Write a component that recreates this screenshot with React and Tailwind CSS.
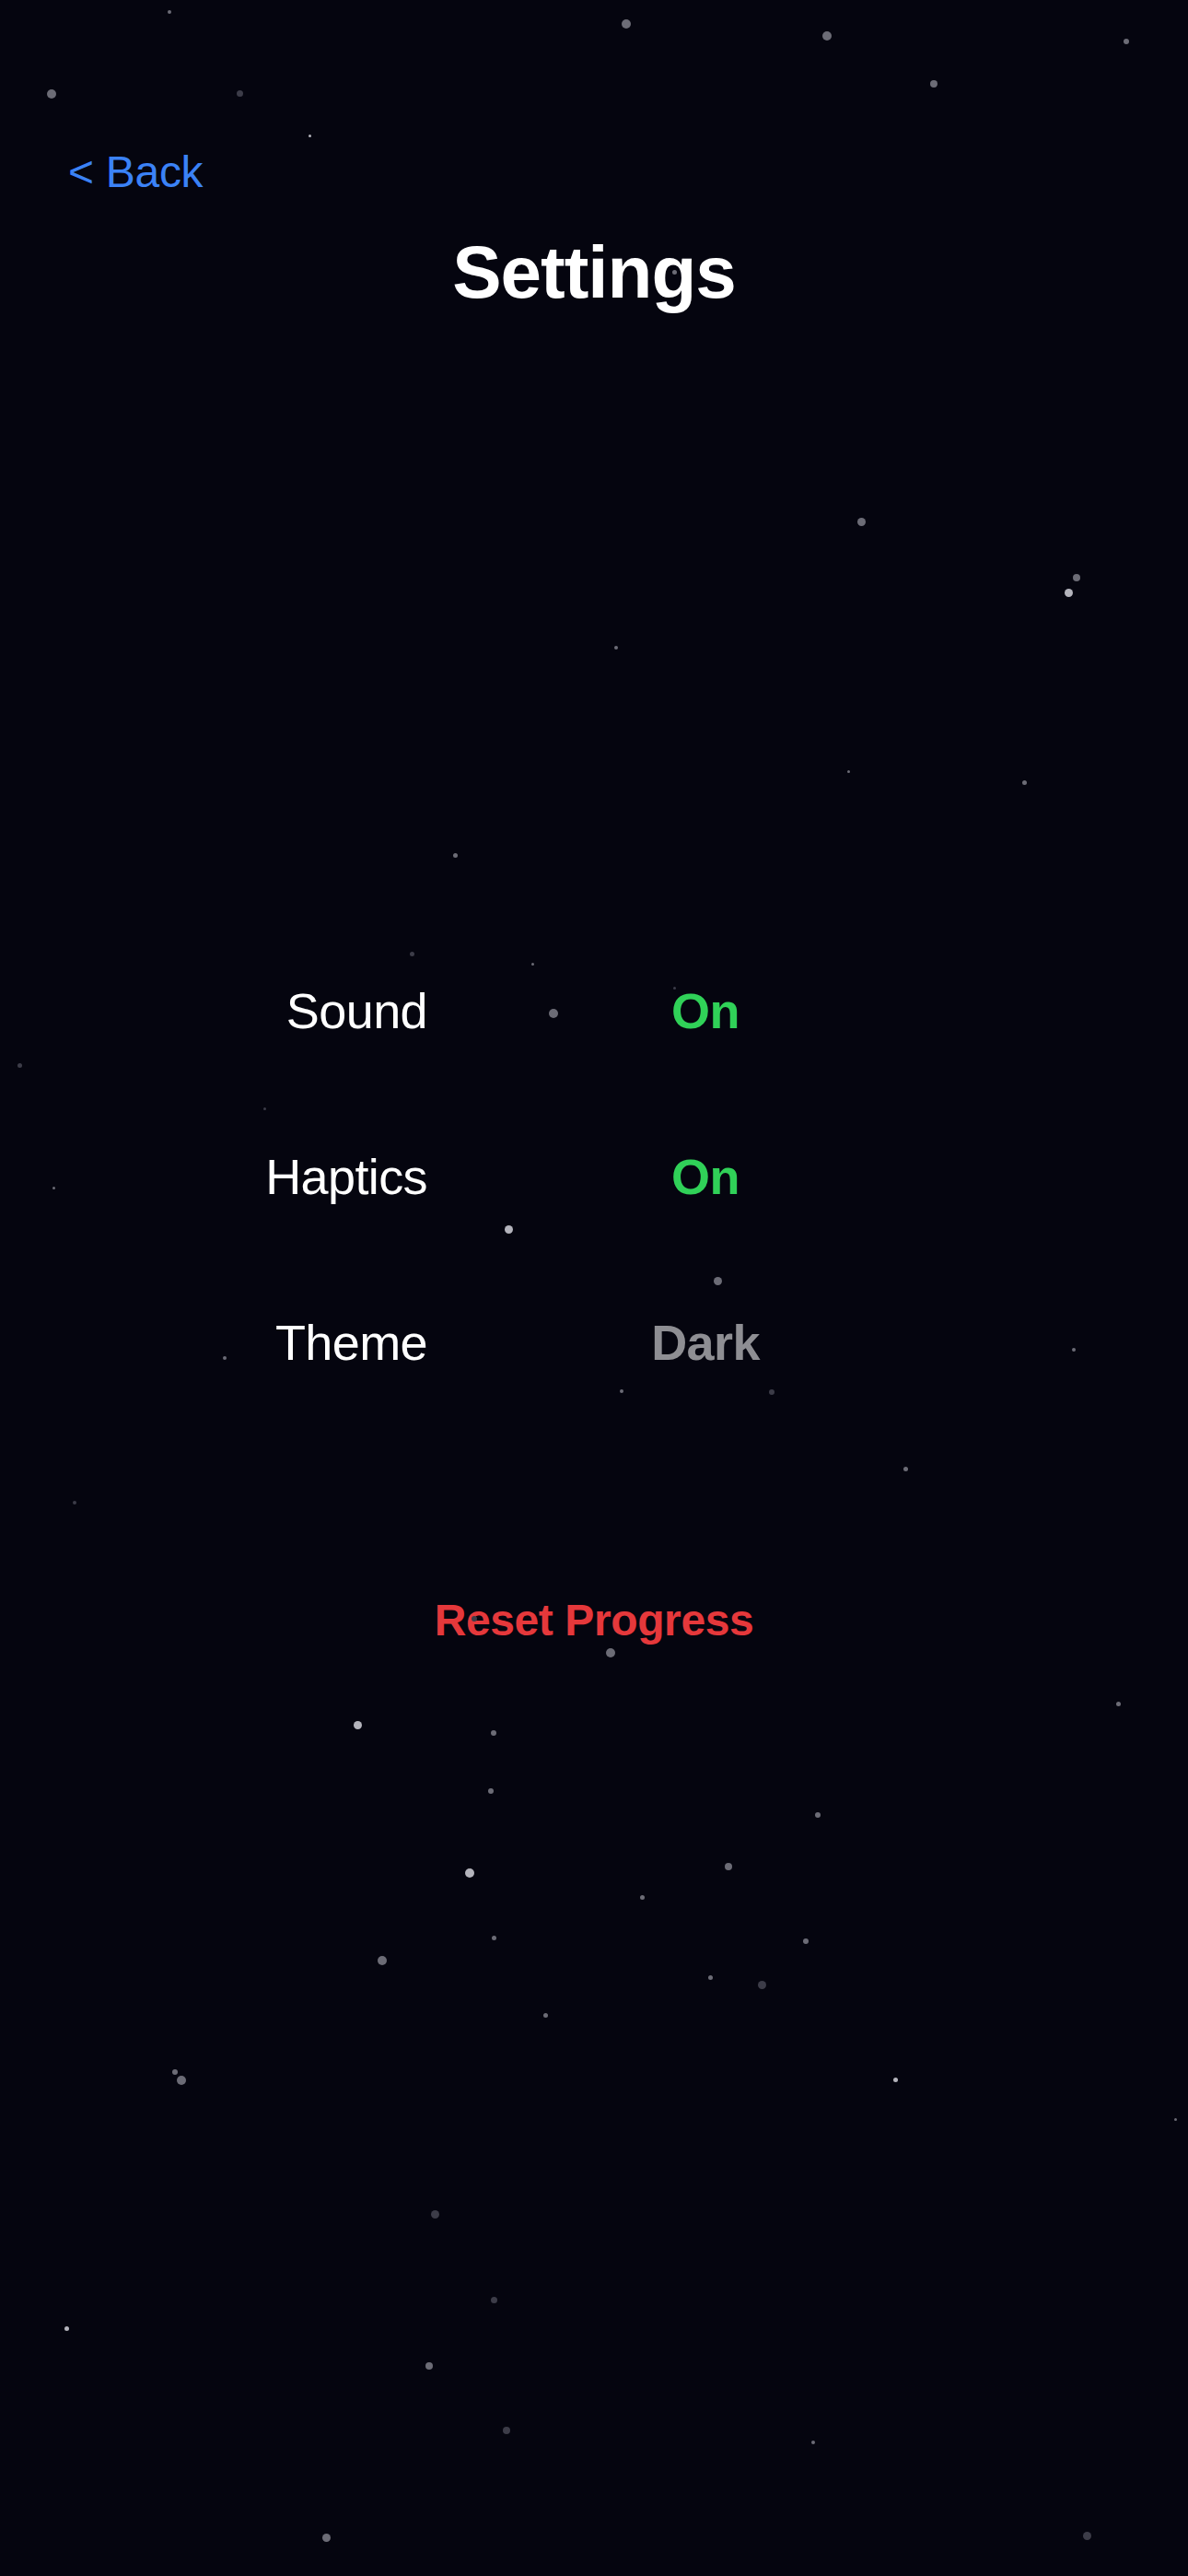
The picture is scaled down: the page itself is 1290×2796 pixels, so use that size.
import React from "react";

const B = "#b4b4bc";
const M = "#6c6c76";
const D = "#3c3c48";

const stars = [
  [184, 13, 4, M], [680, 26, 10, M], [898, 39, 10, M], [1223, 45, 6, M],
  [56, 102, 10, M], [260, 101, 7, D], [1014, 91, 8, M], [336, 147, 3, B],
  [732, 295, 5, M], [935, 566, 9, M], [1169, 627, 8, M], [1160, 643, 9, B],
  [669, 703, 4, M], [921, 837, 3, M], [1112, 849, 5, M], [494, 928, 5, M],
  [447, 1035, 5, D], [578, 1046, 3, M], [732, 1072, 3, D], [601, 1100, 10, M],
  [21, 1156, 5, D], [287, 1203, 3, D], [58, 1289, 3, M], [552, 1334, 9, B],
  [779, 1390, 9, M], [1166, 1465, 4, M], [244, 1474, 4, M], [675, 1510, 4, M],
  [838, 1511, 6, D], [983, 1594, 5, M], [81, 1631, 4, D], [663, 1794, 10, M],
  [515, 1757, 6, D], [1214, 1849, 5, M], [388, 1872, 9, B], [536, 1881, 6, M],
  [533, 1944, 6, M], [888, 1970, 6, M], [510, 2033, 10, B], [791, 2026, 8, M],
  [697, 2059, 5, M], [536, 2103, 5, M], [875, 2107, 6, M], [415, 2128, 10, M],
  [771, 2146, 5, M], [827, 2154, 9, D], [592, 2187, 5, M], [190, 2249, 6, M],
  [197, 2258, 10, M], [972, 2257, 5, B], [1276, 2300, 3, M], [472, 2403, 9, D],
  [536, 2496, 7, D], [72, 2527, 5, B], [466, 2568, 8, M], [550, 2638, 8, D],
  [883, 2651, 4, M], [354, 2754, 9, M], [1180, 2752, 9, D],
];

function Row({ label, value, color }) {
  return (
    <div className="flex pl-[204px] text-[54px] leading-[54px] tracking-[-0.6px]">
      <div className="w-[260px] text-right text-white">{label}</div>
      <div className={`ml-[162px] w-[280px] text-center font-bold ${color}`}>{value}</div>
    </div>
  );
}

export default function App() {
  return (
    <div className="relative w-[1290px] h-[2796px] overflow-hidden bg-[#05050f] font-['Liberation_Sans',Arial,sans-serif]">
      <div className="flex flex-col">
        <div className="pt-[163px] pl-[74px] text-[48px] leading-[48px] tracking-[-0.3px] text-[#3b82f6]">&lt; Back</div>
        <h1 className="mt-[45px] text-center text-[80px] leading-[80px] font-bold tracking-[-1px] text-white">Settings</h1>
        <div className="mt-[734px] flex flex-col gap-[126px]">
          <Row label="Sound" value="On" color="text-[#30d158]" />
          <Row label="Haptics" value="On" color="text-[#30d158]" />
          <Row label="Theme" value="Dark" color="text-[#8e8e93]" />
        </div>
        <div className="mt-[251px] text-center text-[48px] leading-[48px] font-bold tracking-[-0.4px] text-[#e5383b]">Reset Progress</div>
      </div>
      <div className="pointer-events-none absolute inset-0">
        {stars.map(([x, y, s, c], i) => (
          <div
            key={i}
            className="absolute rounded-full"
            style={{ left: x - s / 2, top: y - s / 2, width: s, height: s, backgroundColor: c }}
          />
        ))}
      </div>
    </div>
  );
}
